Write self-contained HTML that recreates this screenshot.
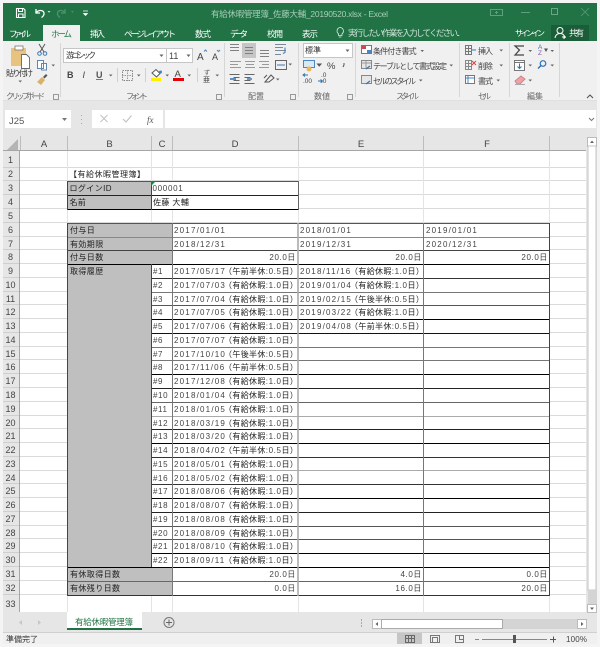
<!DOCTYPE html>
<html lang="ja"><head><meta charset="utf-8"><title>有給休暇管理簿</title>
<style>
html,body{margin:0;padding:0;background:#f4f4f4;width:600px;height:647px;overflow:hidden}
svg{display:block;position:absolute;left:0;top:0;filter:blur(.3px)}
text{font-family:"Liberation Sans","Noto Sans CJK JP",sans-serif;font-size:8px;fill:#333;white-space:pre}
.c{letter-spacing:1.2px;fill:#444}
.d{letter-spacing:.7px;fill:#444}
.p{letter-spacing:.35px;fill:#222}
.n{letter-spacing:.6px;fill:#444}
.l{letter-spacing:.4px;fill:#222}
.r{text-anchor:end;letter-spacing:.6px;fill:#444}
.h{font-size:9px;text-anchor:middle;fill:#444}
.rb{fill:#444;font-size:8px}
.tb{fill:#fff;font-size:8.5px}
.g{fill:#666;font-size:8px}
.ic{fill:none;stroke:#555;stroke-width:1}
.ar{fill:#666}
</style></head><body>
<svg width="600" height="647" viewBox="0 0 600 647" xmlns="http://www.w3.org/2000/svg">
<!-- chrome -->
<rect x="0" y="0" width="600" height="647" fill="#f4f4f4"/>
<rect x="3" y="3" width="594" height="38" fill="#217346"/>
<rect x="3" y="41" width="594" height="60" fill="#f0f0f0"/>
<rect x="3" y="101" width="594" height="35" fill="#e6e6e6"/>
<rect x="3" y="136" width="594" height="496" fill="#e6e6e6"/>
<rect x="3" y="612" width="594" height="20" fill="#e6e6e6"/>
<rect x="3" y="632" width="594" height="1" fill="#d0d0d0"/>
<rect x="3" y="633" width="594" height="11" fill="#f0f0f0"/>

<!-- title bar -->
<path d="M16.5 8.5h7l1.5 1.5v7.5h-8.5zM18.5 8.5v3h4v-3M18.5 17.5v-3.500h4.500v3.500" fill="none" stroke="#fff" stroke-width="1.100"/>
<path d="M36 9v4h4M36.500 12.500c2-3 7-2.500 7.500.5.300 2-1 3.500-2.500 4.500" fill="none" stroke="#fff" stroke-width="1.300"/>
<path d="M47.500 11h3l-1.500 1.800z" fill="#cfe3d8"/>
<path d="M65 9v4h-4M64.500 12.500c-2-3-6.500-2.500-7 .5-.3 2 1 3.500 2.500 4.500" fill="none" stroke="#4f9070" stroke-width="1.300"/>
<path d="M71 11h3l-1.500 1.800z" fill="#4f9070"/>
<path d="M83 11h5M83.500 13.500h4l-2 2z" fill="#fff" stroke="#fff" stroke-width=".7"/>
<text x="211" y="17" textLength="177" lengthAdjust="spacing" style="fill:#a9cbb8;font-size:8.500px">有給休暇管理簿_佐藤大輔_20190520.xlsx - Excel</text>
<path d="M490.500 9.500h12v6h-12zM495 12.500h3M496.500 11v3" fill="none" stroke="#5f9f7f"/>
<path d="M521 12.500h9" stroke="#5f9f7f"/>
<rect x="551.500" y="8.500" width="6" height="6" fill="none" stroke="#6ba688"/>
<path d="M581 8l8 8M589 8l-8 8" stroke="#4f9070"/>

<!-- tabs -->
<rect x="43" y="25" width="37" height="16" fill="#f0f0f0"/>
<text class="tb" x="9" y="37" textLength="22">ファイル</text>
<text x="51" y="37" textLength="21" style="fill:#217346;font-size:8.500px">ホーム</text>
<text class="tb" x="90" y="37" textLength="15">挿入</text>
<text class="tb" x="124" y="37" textLength="52">ページ レイアウト</text>
<text class="tb" x="195" y="37" textLength="16">数式</text>
<text class="tb" x="230" y="37" textLength="18">データ</text>
<text class="tb" x="267" y="37" textLength="16">校閲</text>
<text class="tb" x="302" y="37" textLength="16">表示</text>
<path d="M340 27.500a3.500 3.500 0 0 1 2 6.300v1.700h-3.500v-1.700a3.500 3.500 0 0 1 1.500-6.300zM338.800 37h2.600" fill="none" stroke="#dfeee6" stroke-width=".8"/>
<text x="348" y="36" textLength="112" style="fill:#cfe3d8;font-size:8.500px">実行したい作業を入力してください...</text>
<text class="tb" x="515" y="36" textLength="30" style="font-size:8px">サインイン</text>
<rect x="551" y="25" width="38" height="16" fill="#1b5d39"/>
<circle cx="560" cy="30.500" r="3" fill="none" stroke="#fff"/>
<path d="M555 38c.5-3 2-4.500 5-4.500s4.500 1.500 5 4.500M562 37h4M564 35v4" fill="none" stroke="#fff"/>
<text class="tb" x="569" y="36" textLength="15">共有</text>

<!-- group separators -->
<path d="M60.500 43v54M224.500 43v54M298.500 43v54M355.500 43v54M459.500 43v54M509.500 43v54M559.500 43v54" stroke="#d6d6d6"/>
<rect x="3" y="100" width="594" height="1" fill="#e0e0e0"/>

<!-- group labels -->
<text class="g" x="6" y="99" textLength="39">クリップボード</text>
<text class="g" x="126" y="99" textLength="22">フォント</text>
<text class="g" x="248" y="99" textLength="16">配置</text>
<text class="g" x="314" y="99" textLength="16">数値</text>
<text class="g" x="396" y="99" textLength="23">スタイル</text>
<text class="g" x="478" y="99" textLength="13">セル</text>
<text class="g" x="527" y="99" textLength="16">編集</text>
<path d="M53.500 94.500h5v5h-5zM216.500 94.500h5v5h-5zM290.500 94.500h5v5h-5zM347.500 94.500h5v5h-5z" fill="none" stroke="#999"/>
<path d="M587 98l3-3 3 3" fill="none" stroke="#555" stroke-width="1.100"/>

<!-- clipboard -->
<rect x="11" y="48" width="15" height="18" fill="#e8c27f"/>
<rect x="15" y="46" width="8" height="4" fill="#fff" stroke="#777" stroke-width=".8"/>
<path d="M21.500 54.500h5l3 3v11h-8z" fill="#fff" stroke="#666" stroke-width=".9"/>
<text x="6" y="76" textLength="27" style="font-size:8px;fill:#333">貼り付け</text>
<path d="M18.500 80.500h3.500l-1.750 2z" class="ar"/>
<path d="M39 44l5 8M45 44l-5 8" stroke="#555" stroke-width="1"/>
<circle cx="39.500" cy="53.500" r="1.800" fill="none" stroke="#3b78b5"/><circle cx="45" cy="53.500" r="1.800" fill="none" stroke="#3b78b5"/>
<path d="M37.500 60.500h6v8h-6zM41.500 63.500h5v6.500h-5z" fill="#fff" stroke="#5d87ad"/>
<path d="M51.500 64.500h3.500l-1.750 2z" class="ar"/>
<path d="M37 82l5-5 3 3-4 5z" fill="#d9b26a"/><path d="M43 77l3-3 1.500 1.500-3 3z" fill="#555"/>

<!-- font -->
<rect x="63.500" y="48.500" width="129" height="14" fill="#fff" stroke="#c6c6c6"/>
<path d="M166.500 49v13" stroke="#c6c6c6"/>
<text x="66" y="58" textLength="30" style="font-size:8px;fill:#333">游ゴシック</text>
<text x="169" y="59" style="font-size:9px;fill:#444">11</text>
<path d="M159.500 54.500h4l-2 2.500zM186.500 54.500h4l-2 2.500z" class="ar"/>
<text x="197" y="60" style="font-size:10px;fill:#444">A</text><path d="M204 51.500l1.500-1.500 1.500 1.500" fill="none" stroke="#4a86c0"/>
<text x="212" y="60" style="font-size:9px;fill:#444">A</text><path d="M217 50l1.500 1.500 1.500-1.500" fill="none" stroke="#4a86c0"/>
<text x="67" y="78" style="font-size:9px;font-weight:bold;fill:#444">B</text>
<text x="82.500" y="78" style="font-size:9px;font-style:italic;fill:#444">I</text>
<text x="96" y="78" style="font-size:9px;font-weight:bold;fill:#555">U</text><path d="M96 79.500h7" stroke="#777"/>
<path d="M109 74.500h3.500l-1.750 2zM137 74.500h3.500l-1.750 2zM165.500 74.500h3.500l-1.750 2zM187.500 74.500h3.500l-1.750 2zM215.500 74.500h3.500l-1.750 2z" class="ar"/>
<path d="M117.500 68v14M145.500 68v14M197.500 68v14" stroke="#d0d0d0"/>
<rect x="122.500" y="70.500" width="10" height="10" fill="none" stroke="#888" stroke-dasharray="1.500 1"/><path d="M127.500 70v11M122 75.500h11" stroke="#999" stroke-dasharray="1.500 1"/>
<path d="M152 73l4-3.500 4 4-3.500 3.500z" fill="#fff" stroke="#555"/><circle cx="160.500" cy="72" r="1.500" fill="#3f84c4"/>
<rect x="151" y="78" width="10" height="3" fill="#ffef00"/>
<text x="174.500" y="77" style="font-size:9.500px;fill:#444">A</text>
<rect x="173" y="78" width="11" height="3" fill="#e6000a"/>
<text x="204" y="75" style="font-size:6px;fill:#444">ず</text><text x="203" y="82" style="font-size:7px;fill:#444">亜</text>

<!-- alignment -->
<rect x="242" y="43" width="14" height="15" fill="#c6c6c6"/>
<path d="M230 44.500h9M230 47.500h9M230 50.500h9M245 47.500h8M245 50.500h8M245 53.500h8M260 50.500h9M260 53.500h9M260 56.500h9" stroke="#808080"/>
<path d="M275 44.500h11M275 47.500h8M275 50.500h11M275 54.500h6" stroke="#7a8a99"/><path d="M285 47.500v5l-2 1" fill="none" stroke="#3b78b5"/>
<path d="M230 61.500h11M230 64.500h8M230 67.500h11M245 61.500h10M246 64.500h8M245 67.500h10M259 61.500h10M262 64.500h7M259 67.500h10" stroke="#9a9a9a"/>
<rect x="275.500" y="60.500" width="11" height="9" fill="none" stroke="#666"/><path d="M277 65h8" stroke="#3b78b5"/>
<path d="M288.500 63.500h3.500l-1.750 2z" class="ar"/>
<path d="M229.500 74.500h10M233.500 77.500h6M233.500 80.500h6M229.500 83.500h10M244.500 74.500h10M244.500 77.500h6M244.500 80.500h6M244.500 83.500h10" stroke="#666"/>
<path d="M233 79h-3M236 79h-3" stroke="#2c73b8" stroke-width="1.400"/><path d="M247 79h5" stroke="#2c73b8" stroke-width="1.400"/>
<path d="M265 82l6-7 3 3-5 4zM267 75l-3 3" fill="none" stroke="#555"/><path d="M276 78.500h3.500l-1.750 2z" class="ar"/>

<!-- number -->
<rect x="303.500" y="43.500" width="49" height="14" fill="#fff" stroke="#c6c6c6"/>
<text x="305" y="53" textLength="16" style="font-size:8px;fill:#333">標準</text>
<path d="M345.500 49.500h4l-2 2.500z" class="ar"/>
<rect x="303.500" y="60.500" width="11" height="7" fill="#dbe8f2" stroke="#4a86c0"/><circle cx="309" cy="69" r="2.500" fill="#e8b85f"/>
<path d="M317.500 64h3.500l-1.750 2zM344 63v2l-1 2" class="ar" stroke="#555"/>
<text x="327" y="69" style="font-size:9.500px;fill:#444">%</text>
<text x="303" y="83" style="font-size:6.500px;fill:#444">.00</text><path d="M308 75h-4M305 73.500l-2 1.500 2 1.500" fill="none" stroke="#2c73b8"/>
<text x="321" y="83" style="font-size:6.500px;fill:#444">.0</text><path d="M318 81h4M320.500 79.500l2 1.500-2 1.500" fill="none" stroke="#2c73b8"/>
<text x="321" y="77" style="font-size:6.500px;fill:#444">.0</text>

<!-- styles -->
<rect x="361.500" y="45.500" width="10" height="8" fill="#fff" stroke="#777"/><rect x="362" y="46" width="4" height="3" fill="#c0504d"/><rect x="367" y="50" width="4" height="3" fill="#4a86c0"/>
<text class="rb" x="373" y="54" textLength="45">条件付き書式 </text><path d="M420.500 50h3.500l-1.750 2z" class="ar"/>
<rect x="361.500" y="60.500" width="10" height="8" fill="#e6e6e6" stroke="#888"/><path d="M362 63h9M366 61v7" stroke="#999"/><path d="M366 69l4-3" stroke="#3b78b5" stroke-width="1.400"/>
<text class="rb" x="373" y="69" textLength="74">テーブルとして書式設定</text><path d="M449.500 64.500h3.500l-1.750 2z" class="ar"/>
<rect x="361.500" y="75.500" width="10" height="8" fill="#e6e6e6" stroke="#888"/><path d="M366 84l4-3" stroke="#3b78b5" stroke-width="1.400"/>
<text class="rb" x="373" y="84" textLength="43">セルのスタイル</text><path d="M419 79.500h3.500l-1.750 2z" class="ar"/>

<!-- cells -->
<path d="M465.500 45.500h6v9h-6zM465.500 48.500h6M465.500 51.500h6M468.500 45.500v9" fill="none" stroke="#777"/><path d="M472 50h4" stroke="#2c73b8"/>
<text class="rb" x="478" y="54" textLength="15">挿入</text><path d="M499.500 49.500h3.500l-1.750 2z" class="ar"/>
<path d="M465.500 60.500h6v9h-6zM465.500 63.500h6M465.500 66.500h6M468.500 60.500v9" fill="none" stroke="#888"/><path d="M472 61l4 4M476 61l-4 4" stroke="#d8443c"/>
<text class="rb" x="478" y="69" textLength="15">削除</text><path d="M499.500 64.500h3.500l-1.750 2z" class="ar"/>
<rect x="465.500" y="75.500" width="9" height="8" fill="#fff" stroke="#777"/><path d="M465 78h10M468 76v8" stroke="#4a86c0"/>
<text class="rb" x="478" y="84" textLength="15">書式</text><path d="M496.500 79.500h3.500l-1.750 2z" class="ar"/>

<!-- editing -->
<path d="M524 46h-9l4.500 4-4.500 5h9" fill="none" stroke="#444" stroke-width="1.200"/>
<path d="M528.500 50h3.500l-1.750 2z" class="ar"/>
<text x="538" y="49" style="font-size:6.500px;fill:#3b78b5">A</text><text x="538" y="55" style="font-size:6.500px;fill:#8957a1">Z</text>
<path d="M544 48.500h4l-2 3.500z" fill="#555"/><path d="M550.500 50h3.500l-1.750 2z" class="ar"/>
<rect x="514.500" y="60.500" width="10" height="10" fill="#fff" stroke="#777"/><path d="M514.500 62.500h10" stroke="#777"/><path d="M519.500 63.500v5M517.500 66.500l2 2 2-2" fill="none" stroke="#2c73b8"/>
<path d="M528.500 64.500h3.500l-1.750 2z" class="ar"/>
<circle cx="543" cy="63.500" r="2.800" fill="none" stroke="#2c73b8" stroke-width="1.200"/><path d="M541 65.500l-3 3" stroke="#2c73b8" stroke-width="1.400"/>
<path d="M550.500 64.500h3.500l-1.750 2z" class="ar"/>
<path d="M515 81l6-5 4 3-5 5h-3z" fill="#f0a0a8" stroke="#c88"/><path d="M515 84.500h10" stroke="#aaa"/>
<path d="M528.500 79.500h3.500l-1.750 2z" class="ar"/>

<!-- formula bar -->
<rect x="5" y="110" width="66" height="18" fill="#fff"/>
<text x="9" y="124" style="font-size:9.500px;fill:#555">J25</text>
<path d="M62 118h5l-2.500 3z" fill="#777"/>
<path d="M81.500 115v1M81.500 119v1M81.500 123v1" stroke="#aaa"/>
<rect x="92" y="110" width="71" height="18" fill="#fff"/>
<path d="M100.500 115l7 7M107.500 115l-7 7" stroke="#c4c4c4" stroke-width="1.100"/>
<path d="M123 119l3 3 5.500-6.500" fill="none" stroke="#c4c4c4" stroke-width="1.200"/>
<text x="147" y="123" style="font-size:9px;font-style:italic;fill:#555;font-family:'Liberation Serif',serif">fx</text>
<rect x="165" y="110" width="431" height="18" fill="#fff"/>
<path d="M589 118l2.500 2.500 2.500-2.500" fill="none" stroke="#777"/>

<!-- sheet -->
<rect x="20" y="151" width="566" height="461" fill="#fff"/>
<rect x="3" y="136" width="583" height="15" fill="#e6e6e6"/>
<rect x="3" y="151" width="17" height="461" fill="#e6e6e6"/>
<path d="M18 139v11H7z" fill="#b4b4b4"/>
<!-- gridlines -->
<path d="M20 167.500h566M20 180.500h566M20 194.500h566M20 208.500h566M20 222.500h566M20 236.500h566M20 249.500h566M20 263.500h566M20 277.500h566M20 291.500h566M20 304.500h566M20 318.500h566M20 332.500h566M20 346.500h566M20 359.500h566M20 373.500h566M20 387.500h566M20 401.500h566M20 415.500h566M20 428.500h566M20 442.500h566M20 456.500h566M20 470.500h566M20 483.500h566M20 497.500h566M20 511.500h566M20 525.500h566M20 538.500h566M20 552.500h566M20 566.500h566M20 580.500h566M20 594.500h566" stroke="#dadada"/>
<path d="M67.500 151v461M151.500 151v461M172.500 151v461M298.500 151v461M423.500 151v461M549.500 151v461" stroke="#e4e4e4"/>
<!-- row header separators -->
<path d="M3 167.500h17M3 180.500h17M3 194.500h17M3 208.500h17M3 222.500h17M3 236.500h17M3 249.500h17M3 263.500h17M3 277.500h17M3 291.500h17M3 304.500h17M3 318.500h17M3 332.500h17M3 346.500h17M3 359.500h17M3 373.500h17M3 387.500h17M3 401.500h17M3 415.500h17M3 428.500h17M3 442.500h17M3 456.500h17M3 470.500h17M3 483.500h17M3 497.500h17M3 511.500h17M3 525.500h17M3 538.500h17M3 552.500h17M3 566.500h17M3 580.500h17M3 594.500h17" stroke="#cfcfcf"/>
<path d="M20.500 136v15M67.500 136v15M151.500 136v15M172.500 136v15M298.500 136v15M423.500 136v15M549.500 136v15" stroke="#bdbdbd"/>
<path d="M3 150.500h583M19.500 151v461" stroke="#a6a6a6"/>
<text class="h" x="44" y="147" style="font-size:9.500px">A</text><text class="h" x="109.500" y="147" style="font-size:9.500px">B</text><text class="h" x="162" y="147" style="font-size:9.500px">C</text><text class="h" x="235" y="147" style="font-size:9.500px">D</text><text class="h" x="361" y="147" style="font-size:9.500px">E</text><text class="h" x="487" y="147" style="font-size:9.500px">F</text>
<text class="h" x="10.500" y="163">1</text><text class="h" x="10.500" y="177">2</text><text class="h" x="10.500" y="191">3</text><text class="h" x="10.500" y="205">4</text><text class="h" x="10.500" y="219">5</text><text class="h" x="10.500" y="233">6</text><text class="h" x="10.500" y="247">7</text><text class="h" x="10.500" y="260">8</text><text class="h" x="10.500" y="274">9</text><text class="h" x="10.500" y="288">10</text><text class="h" x="10.500" y="302">11</text><text class="h" x="10.500" y="315">12</text><text class="h" x="10.500" y="329">13</text><text class="h" x="10.500" y="343">14</text><text class="h" x="10.500" y="357">15</text><text class="h" x="10.500" y="370">16</text><text class="h" x="10.500" y="384">17</text><text class="h" x="10.500" y="398">18</text><text class="h" x="10.500" y="412">19</text><text class="h" x="10.500" y="426">20</text><text class="h" x="10.500" y="439">21</text><text class="h" x="10.500" y="453">22</text><text class="h" x="10.500" y="467">23</text><text class="h" x="10.500" y="481">24</text><text class="h" x="10.500" y="494">25</text><text class="h" x="10.500" y="508">26</text><text class="h" x="10.500" y="522">27</text><text class="h" x="10.500" y="536">28</text><text class="h" x="10.500" y="549">29</text><text class="h" x="10.500" y="563">30</text><text class="h" x="10.500" y="577">31</text><text class="h" x="10.500" y="591">32</text><text class="h" x="10.500" y="607">33</text>

<!-- fills -->
<g fill="#bfbfbf">
<rect x="67" y="181" width="84" height="28"/>
<rect x="67" y="223" width="105" height="41"/>
<rect x="67" y="264" width="84" height="303"/>
<rect x="67" y="567" width="105" height="28"/>
</g>
<rect x="151" y="181" width="147" height="28" fill="#fff"/>
<rect x="172" y="223" width="377" height="372" fill="#fff"/>
<rect x="151" y="264" width="21" height="303" fill="#fff"/>

<!-- table borders -->
<path d="M67 181.500h231" stroke="#555"/><path d="M67 195.500h231" stroke="#222"/><path d="M67 209.500h231" stroke="#000"/>
<path d="M67.500 181v29M151.500 181v29" stroke="#444"/><path d="M298.500 181v29" stroke="#666"/>
<path d="M151 181h5l-5 5z" fill="#0e8a3a"/>
<path d="M67 223.500h482" stroke="#555"/>
<path d="M67 237.500h482" stroke="#888"/>
<path d="M67 250.500h482" stroke="#444"/>
<path d="M67 264.500h482" stroke="#000"/>
<path d="M151 278.500h398" stroke="#333"/>
<path d="M151 292.500h398" stroke="#777"/>
<path d="M151 305.500h398" stroke="#555"/>
<path d="M151 319.500h398" stroke="#000"/>
<path d="M151 333.500h398" stroke="#111"/>
<path d="M151 347.500h398" stroke="#777"/>
<path d="M151 360.500h398" stroke="#777"/>
<path d="M151 374.500h398" stroke="#000"/>
<path d="M151 388.500h398" stroke="#222"/>
<path d="M151 402.500h398" stroke="#666"/>
<path d="M151 416.500h398" stroke="#aaa"/>
<path d="M151 429.500h398" stroke="#222"/>
<path d="M151 443.500h398" stroke="#000"/>
<path d="M151 457.500h398" stroke="#333"/>
<path d="M151 470.500h398" stroke="#aaa"/>
<path d="M151 484.500h398" stroke="#333"/>
<path d="M151 498.500h398" stroke="#000"/>
<path d="M151 512.500h398" stroke="#222"/>
<path d="M151 526.500h398" stroke="#555"/>
<path d="M151 539.500h398" stroke="#555"/>
<path d="M151 553.500h398" stroke="#000"/>
<path d="M67 567.500h482" stroke="#000"/>
<path d="M67 581.500h482" stroke="#666"/>
<path d="M67 595.500h482" stroke="#333"/>
<path d="M67.500 223v373M549.500 223v373" stroke="#444"/>
<path d="M151.500 264v303" stroke="#444"/>
<path d="M172.500 223v373" stroke="#777"/>
<path d="M298 223v373" stroke="#aaa" stroke-width="1.600"/>
<path d="M423.500 223v373" stroke="#777"/>

<!-- cells text -->
<text x="69" y="177" class="l" style="letter-spacing:.5px">【有給休暇管理簿】</text>
<text x="69.500" y="191" class="l">ログインID</text>
<text x="152.500" y="191" class="d">000001</text>
<text x="69.500" y="205" class="l">名前</text>
<text x="153" y="205" class="l">佐藤 大輔</text>
<text x="70" y="233" class="l">付与日</text><text x="70" y="247" class="l">有効期限</text><text x="70" y="260" class="l">付与日数</text><text x="70" y="274" class="l">取得履歴</text>
<text x="70" y="577" class="l">有休取得日数</text><text x="70" y="591" class="l">有休残り日数</text>
<text x="174" y="233" class="c">2017/01/01</text><text x="300" y="233" class="c">2018/01/01</text><text x="426" y="233" class="c">2019/01/01</text>
<text x="174" y="247" class="c">2018/12/31</text><text x="300" y="247" class="c">2019/12/31</text><text x="426" y="247" class="c">2020/12/31</text>
<text x="296" y="260" class="r">20.0日</text><text x="422" y="260" class="r">20.0日</text><text x="548" y="260" class="r">20.0日</text>
<text x="296" y="577" class="r">20.0日</text><text x="422" y="577" class="r">4.0日</text><text x="548" y="577" class="r">0.0日</text>
<text x="296" y="591" class="r">0.0日</text><text x="422" y="591" class="r">16.0日</text><text x="548" y="591" class="r">20.0日</text>

<text x="153" y="274" class="n">#1</text><text x="174" y="274" class="c">2017/05/17</text><text x="224" y="274" class="p">（午前半休<tspan class="n">:0.5</tspan>日）</text><text x="300" y="274" class="c">2018/11/16</text><text x="350" y="274" class="p">（有給休暇<tspan class="n">:1.0</tspan>日）</text>
<text x="153" y="288" class="n">#2</text><text x="174" y="288" class="c">2017/07/03</text><text x="224" y="288" class="p">（有給休暇<tspan class="n">:1.0</tspan>日）</text><text x="300" y="288" class="c">2019/01/04</text><text x="350" y="288" class="p">（有給休暇<tspan class="n">:1.0</tspan>日）</text>
<text x="153" y="302" class="n">#3</text><text x="174" y="302" class="c">2017/07/04</text><text x="224" y="302" class="p">（有給休暇<tspan class="n">:1.0</tspan>日）</text><text x="300" y="302" class="c">2019/02/15</text><text x="350" y="302" class="p">（午後半休<tspan class="n">:0.5</tspan>日）</text>
<text x="153" y="315" class="n">#4</text><text x="174" y="315" class="c">2017/07/05</text><text x="224" y="315" class="p">（有給休暇<tspan class="n">:1.0</tspan>日）</text><text x="300" y="315" class="c">2019/03/22</text><text x="350" y="315" class="p">（有給休暇<tspan class="n">:1.0</tspan>日）</text>
<text x="153" y="329" class="n">#5</text><text x="174" y="329" class="c">2017/07/06</text><text x="224" y="329" class="p">（有給休暇<tspan class="n">:1.0</tspan>日）</text><text x="300" y="329" class="c">2019/04/08</text><text x="350" y="329" class="p">（午前半休<tspan class="n">:0.5</tspan>日）</text>
<text x="153" y="343" class="n">#6</text><text x="174" y="343" class="c">2017/07/07</text><text x="224" y="343" class="p">（有給休暇<tspan class="n">:1.0</tspan>日）</text>
<text x="153" y="357" class="n">#7</text><text x="174" y="357" class="c">2017/10/10</text><text x="224" y="357" class="p">（午後半休<tspan class="n">:0.5</tspan>日）</text>
<text x="153" y="370" class="n">#8</text><text x="174" y="370" class="c">2017/11/06</text><text x="224" y="370" class="p">（午前半休<tspan class="n">:0.5</tspan>日）</text>
<text x="153" y="384" class="n">#9</text><text x="174" y="384" class="c">2017/12/08</text><text x="224" y="384" class="p">（有給休暇<tspan class="n">:1.0</tspan>日）</text>
<text x="153" y="398" class="n">#10</text><text x="174" y="398" class="c">2018/01/04</text><text x="224" y="398" class="p">（有給休暇<tspan class="n">:1.0</tspan>日）</text>
<text x="153" y="412" class="n">#11</text><text x="174" y="412" class="c">2018/01/05</text><text x="224" y="412" class="p">（有給休暇<tspan class="n">:1.0</tspan>日）</text>
<text x="153" y="426" class="n">#12</text><text x="174" y="426" class="c">2018/03/19</text><text x="224" y="426" class="p">（有給休暇<tspan class="n">:1.0</tspan>日）</text>
<text x="153" y="439" class="n">#13</text><text x="174" y="439" class="c">2018/03/20</text><text x="224" y="439" class="p">（有給休暇<tspan class="n">:1.0</tspan>日）</text>
<text x="153" y="453" class="n">#14</text><text x="174" y="453" class="c">2018/04/02</text><text x="224" y="453" class="p">（午前半休<tspan class="n">:0.5</tspan>日）</text>
<text x="153" y="467" class="n">#15</text><text x="174" y="467" class="c">2018/05/01</text><text x="224" y="467" class="p">（有給休暇<tspan class="n">:1.0</tspan>日）</text>
<text x="153" y="481" class="n">#16</text><text x="174" y="481" class="c">2018/05/02</text><text x="224" y="481" class="p">（有給休暇<tspan class="n">:1.0</tspan>日）</text>
<text x="153" y="494" class="n">#17</text><text x="174" y="494" class="c">2018/08/06</text><text x="224" y="494" class="p">（有給休暇<tspan class="n">:1.0</tspan>日）</text>
<text x="153" y="508" class="n">#18</text><text x="174" y="508" class="c">2018/08/07</text><text x="224" y="508" class="p">（有給休暇<tspan class="n">:1.0</tspan>日）</text>
<text x="153" y="522" class="n">#19</text><text x="174" y="522" class="c">2018/08/08</text><text x="224" y="522" class="p">（有給休暇<tspan class="n">:1.0</tspan>日）</text>
<text x="153" y="536" class="n">#20</text><text x="174" y="536" class="c">2018/08/09</text><text x="224" y="536" class="p">（有給休暇<tspan class="n">:1.0</tspan>日）</text>
<text x="153" y="549" class="n">#21</text><text x="174" y="549" class="c">2018/08/10</text><text x="224" y="549" class="p">（有給休暇<tspan class="n">:1.0</tspan>日）</text>
<text x="153" y="563" class="n">#22</text><text x="174" y="563" class="c">2018/09/11</text><text x="224" y="563" class="p">（有給休暇<tspan class="n">:1.0</tspan>日）</text>

<!-- vertical scrollbar -->
<rect x="587.500" y="137.500" width="9" height="9" fill="#fff" stroke="#bbb"/>
<rect x="588" y="146" width="8" height="444" fill="#fff" stroke="#c6c6c6"/>
<rect x="588" y="590" width="9" height="14" fill="#d4d4d4"/>
<rect x="587.500" y="604.500" width="9" height="8" fill="#fff" stroke="#bbb"/>
<path d="M590 143h4l-2-2.500zM590 607.500h4l-2 2.500z" fill="#666"/>

<!-- sheet tabs -->
<rect x="67" y="612" width="75" height="18" fill="#fff"/>
<rect x="67" y="628" width="75" height="2" fill="#217346"/>
<text x="75" y="625" textLength="58" style="font-size:8.500px;fill:#217346">有給休暇管理簿</text>
<path d="M22 620l-3 2.500 3 2.500zM38 620l3 2.500-3 2.500z" fill="#c6c6c6"/>
<circle cx="169" cy="622.500" r="5" fill="none" stroke="#777"/><path d="M166 622.500h6M169 619.500v6" stroke="#666"/>
<path d="M361.500 619v2M361.500 622v2M361.500 625v2" stroke="#aaa"/>
<rect x="372.500" y="619.500" width="9" height="9" fill="#fff" stroke="#bbb"/>
<rect x="381.500" y="619.500" width="121" height="9" fill="#fff" stroke="#aaa"/>
<rect x="503" y="619" width="74" height="10" fill="#d4d4d4"/>
<rect x="577.500" y="619.500" width="9" height="9" fill="#fff" stroke="#bbb"/>
<path d="M378 622v4l-2.500-2zM581 622v4l2.500-2z" fill="#666"/>

<!-- status bar -->
<text x="6" y="642" textLength="32" style="font-size:8px;fill:#333">準備完了</text>
<rect x="397" y="633" width="25" height="11" fill="#c6c6c6"/>
<path d="M405.500 635.500h9v7h-9zM408.500 635.500v7M411.500 635.500v7M405.500 638.500h9" fill="none" stroke="#666"/>
<path d="M430.500 635.500h9v7h-9zM432.500 637.500h5v5h-5z" fill="none" stroke="#777"/>
<path d="M455.500 635.500h8v7h-8zM459.500 635.500v4h4" fill="none" stroke="#777"/>
<path d="M475 639.500h4M482 639.500h65" stroke="#888"/>
<rect x="513" y="635" width="3" height="8" fill="#555"/>
<path d="M550 639.500h6M553.500 636.500v6" stroke="#555"/>
<text x="566" y="642" textLength="21" style="font-size:8px;fill:#444">100%</text>
</svg>
</body></html>
